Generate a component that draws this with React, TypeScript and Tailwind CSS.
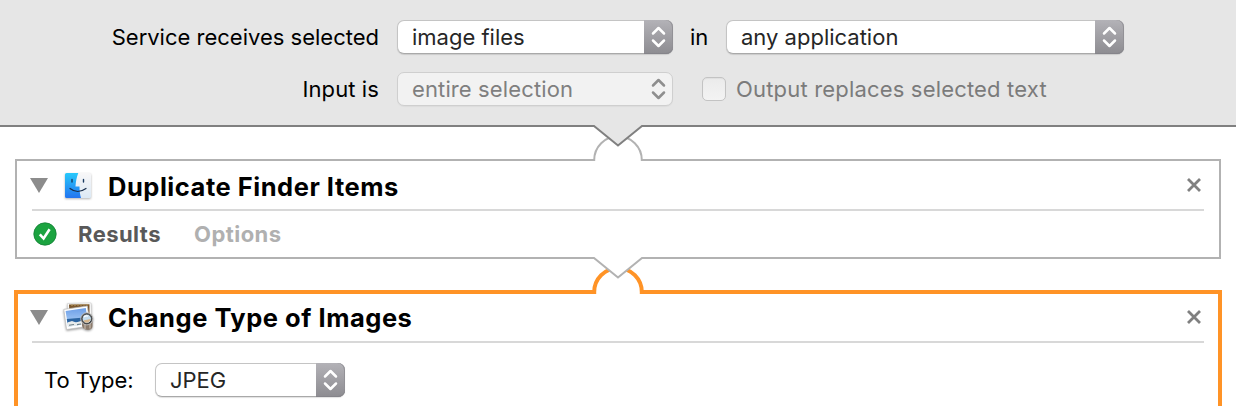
import type { ReactNode } from "react";

function Chevrons({ color }: { color: string }) {
  return (
    <svg width="29" height="34" viewBox="0 0 29 34" fill="none" stroke={color} strokeWidth="2.5" strokeLinecap="round" strokeLinejoin="round">
      <path d="M9 13.5 14.5 8 20 13.5M9 20.5 14.5 26 20 20.5" />
    </svg>
  );
}

function Select({ label, className, disabled }: { label: string; className: string; disabled?: boolean }) {
  const look = disabled
    ? "bg-[#f2f2f2] text-[#7f7f7f] border-[#cfcfcf] shadow-[0_1px_1px_rgba(0,0,0,0.04)] tracking-[0.12px]"
    : "bg-white text-[#262626] border-[#c4c4c4] border-b-[#a9a9a9] shadow-[0_1px_1px_rgba(0,0,0,0.12)]";
  return (
    <div className={`relative flex h-[34px] shrink-0 items-center rounded-[7px] border pl-[14px] ${look} ${className}`}>
      <span className="grow whitespace-nowrap">{label}</span>
      <span
        className={`-my-px -mr-px h-[34px] w-[29px] shrink-0 rounded-r-[7px] ${
          disabled ? "" : "bg-linear-to-b from-[#b3b2b7] to-[#8d8c91] shadow-[inset_0_-1px_0_#85848a,inset_-1px_0_0_#929196]"
        }`}
      >
        <Chevrons color={disabled ? "#8e8e8e" : "#ffffff"} />
      </span>
    </div>
  );
}

function Pointer({ fill, stroke, className }: { fill: string; stroke: string; className: string }) {
  return (
    <svg className={`absolute left-[590px] z-20 ${className}`} width="56" height="23" viewBox="0 0 56 23">
      <path d="M3 0H53V1L52 1 28 21 4 1H3Z" fill={fill} />
      <path d="M3 1H4L28 20.5 52 1H53" fill="none" stroke={stroke} strokeWidth="2" />
    </svg>
  );
}

function Socket({ stroke, width, className }: { stroke: string; width: number; className: string }) {
  return (
    <svg className={`absolute z-10 ${className}`} width="56" height="30" viewBox="0 0 56 30">
      <path d="M4.2 30V26A23.8 23.8 0 0 1 51.8 26V30Z" fill="#fff" />
      <path d={`M4.2 ${26 + width / 2}V26A23.8 23.8 0 0 1 51.8 26V${26 + width / 2}`} fill="none" stroke={stroke} strokeWidth={width} />
    </svg>
  );
}

function FinderIcon() {
  return (
    <svg width="30" height="30" viewBox="0 0 30 30" className="drop-shadow-[0_1px_1px_rgba(0,0,0,0.3)]">
      <defs>
        <linearGradient id="finderBlue" x2="0" y2="1">
          <stop stopColor="#28c9fb" />
          <stop offset="1" stopColor="#2274f0" />
        </linearGradient>
        <linearGradient id="finderWhite" x2="0" y2="1">
          <stop stopColor="#f8f7f8" />
          <stop offset="1" stopColor="#dce9f5" />
        </linearGradient>
      </defs>
      <rect x="2" y="2" width="26" height="25" rx="1.5" fill="url(#finderWhite)" />
      <path d="M3.5 2H15.3C13.6 6 12.8 11 12.5 15.5H16.5C16.5 20 17 24 18 27H3.5Q2 27 2 25.5V3.5Q2 2 3.5 2Z" fill="url(#finderBlue)" />
      <path d="M9 8.5V11M20.5 8.5V11" stroke="#183b62" strokeWidth="1.4" strokeLinecap="round" />
      <path d="M7 17.5Q14.5 23.5 23 17.5" stroke="#172d4b" strokeWidth="1.2" fill="none" strokeLinecap="round" />
    </svg>
  );
}

function PhotosIcon() {
  return (
    <svg width="32" height="30" viewBox="0 0 32 30" className="drop-shadow-[0_1px_1px_rgba(0,0,0,0.4)]">
      <defs>
        <linearGradient id="sky" x2="0" y2="1">
          <stop stopColor="#6d9fe8" />
          <stop offset="1" stopColor="#b5d6f8" />
        </linearGradient>
      </defs>
      <path d="M4.5 1.5 28 1 28.5 21 6 21Z" fill="#fff" stroke="#ccc" strokeWidth=".6" />
      <path d="M6 2.6 26.5 2.2V14L6.5 15Z" fill="#79562e" />
      <path d="M8 3.2 26 2.8" stroke="#b3945b" strokeWidth="1" strokeDasharray="2 1" />
      <path d="M.8 7.4 24.3 4 27.3 24 3.6 27.5Z" fill="#fff" stroke="#bdbdbd" strokeWidth=".7" />
      <path d="M2.6 9 22.8 6.1 25 21.8 5 24.8Z" fill="url(#sky)" />
      <path d="M3.8 17 24 15.2 24.6 19.5 4.4 21Z" fill="#2c65a2" />
      <path d="M4.3 20.6 9 19 13 20.4 18 19 24.7 20 25 21.8 5 24.8Z" fill="#e9ecec" />
      <path d="M6 23.3 11 22.5M14 22.6 18 22" stroke="#6b7f88" strokeWidth="1.1" />
      <path d="M19 18.5H29.5V24Q29.5 27.5 25 28 20 27.5 19 24Z" fill="#8b7b6c" />
      <path d="M22 22V27M27 22V26.5" stroke="#bdb0a2" strokeWidth="1.4" fill="none" />
      <circle cx="23.8" cy="16.8" r="6.1" fill="#666" stroke="#c5c5c5" strokeWidth=".8" />
      <circle cx="23.8" cy="16.8" r="4.7" fill="#c3dbec" stroke="#292929" strokeWidth=".8" />
      <path d="M20.3 18.5 27.5 17Q27 20.7 23.8 20.7 21.2 20.7 20.3 18.5Z" fill="#d7b68c" />
      <path d="M21 15Q22.8 13.3 25 14.2" stroke="#fff" strokeWidth="1.4" fill="none" />
    </svg>
  );
}

function CardHeader({ icon, title, className }: { icon: ReactNode; title: string; className: string }) {
  return (
    <div className={`flex items-center border-b-2 border-[#d8d8d8] ${className}`}>
      <svg width="18" height="15" viewBox="0 0 18 15" className="-ml-[2px] mt-px shrink-0">
        <path d="M0 0H18L9 15Z" fill="#8c8c8c" />
      </svg>
      <span className="ml-[15px] mt-px flex w-[32px] shrink-0">{icon}</span>
      <h2 className="ml-[13px] mt-[3px] grow whitespace-nowrap text-[25.5px] leading-[30px] font-bold tracking-[0.52px] [font-optical-sizing:none] text-black">{title}</h2>
      <svg width="14" height="14" viewBox="0 0 14 14" className="mr-[3px]" stroke="#808080" strokeWidth="2.8">
        <path d="M1 1 13 13M13 1 1 13" />
      </svg>
    </div>
  );
}

export default function App() {
  return (
    <main className="flex h-[406px] w-[1236px] flex-col overflow-hidden bg-white font-['Inter',sans-serif] text-[22px] leading-[28px] text-black">
      <section className="relative flex h-[127px] shrink-0 flex-col gap-[18px] border-b-2 border-[#808080] bg-[#e6e6e6] pt-[20px]">
        <div className="flex h-[34px] items-center">
          <span className="mr-[18px] w-[379px] text-right whitespace-nowrap">Service receives selected</span>
          <Select label="image files" className="w-[276px]" />
          <span className="w-[53px] pl-[17px]">in</span>
          <Select label="any application" className="w-[398px]" />
        </div>
        <div className="flex h-[34px] items-center">
          <span className="mr-[18px] w-[379px] text-right whitespace-nowrap tracking-[0.1px]">Input is</span>
          <Select label="entire selection" className="w-[276px]" disabled />
          <span className="ml-[29px] size-[24px] rounded-[5px] border border-[#c3c3c3] bg-linear-to-b from-[#ebebeb] to-[#f3f3f3] shadow-[inset_0_1px_1px_rgba(0,0,0,0.05)]" />
          <span className="ml-[10px] whitespace-nowrap tracking-[0.18px] text-[#7b7b7b]">Output replaces selected text</span>
        </div>
        <Pointer fill="#e6e6e6" stroke="#808080" className="-bottom-[23px]" />
      </section>

      <section className="relative mt-[32px] flex h-[100px] shrink-0 flex-col">
        <div className="mx-[15px] h-[100px] border-2 border-[#b2b2b2] px-[15px]">
          <CardHeader icon={<FinderIcon />} title="Duplicate Finder Items" className="h-[50px]" />
          <div className="flex h-[46px] items-center font-bold tracking-[0.45px]">
            <svg width="24" height="24" viewBox="0 0 24 24" className="-mt-px ml-px shrink-0">
              <circle cx="12" cy="12" r="11.2" fill="#1ba340" stroke="#148036" strokeWidth=".8" />
              <path d="M6.8 12.3 10.6 16.5 16.6 7.3" fill="none" stroke="#fff" strokeWidth="2.6" />
            </svg>
            <span className="ml-[21px] w-[116px] text-[#595959]">Results</span>
            <span className="text-[#b0b0b0]">Options</span>
          </div>
        </div>
        <Socket stroke="#b2b2b2" width={2} className="left-[590px] -top-[25px]" />
        <Pointer fill="#ffffff" stroke="#b2b2b2" className="-bottom-[21px]" />
      </section>

      <section className="relative mt-[31px] flex h-[130px] shrink-0 flex-col">
        <div className="mx-[14px] h-[130px] border-4 border-[#ff9326] px-[14px]">
          <CardHeader icon={<PhotosIcon />} title="Change Type of Images" className="h-[49px] pb-[2px]" />
          <div className="mt-[20px] flex h-[34px] items-center">
            <span className="w-[123px] pl-[12px] whitespace-nowrap">To Type:</span>
            <Select label="JPEG" className="w-[190px]" />
          </div>
        </div>
        <Socket stroke="#ff9326" width={4} className="left-[590px] -top-[24px]" />
      </section>
    </main>
  );
}
